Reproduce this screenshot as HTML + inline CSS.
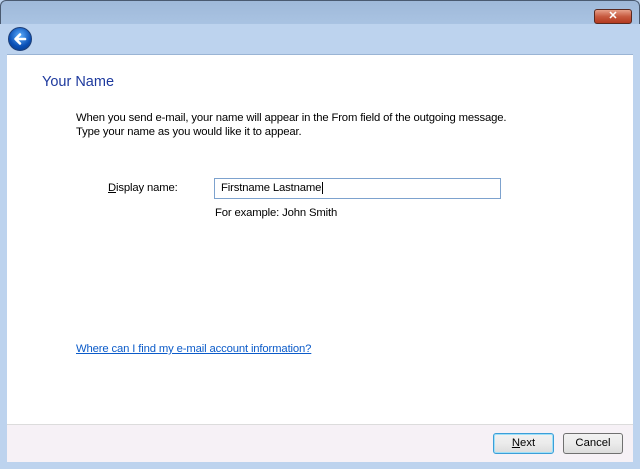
<!DOCTYPE html>
<html><head><style>
*{margin:0;padding:0;box-sizing:border-box}
body{width:640px;height:469px;overflow:hidden;position:relative;background:#bdd3ee;font-family:"Liberation Sans",sans-serif;font-size:11.3px;color:#000}
.top{position:absolute;left:0;top:0;width:640px;height:24px;background:linear-gradient(#9fb9d9,#a9c3e2);border:1px solid #4a5a70;border-bottom:none;border-radius:6px 6px 0 0}
.close{position:absolute;left:594px;top:9px;width:38px;height:15px;border:1px solid #5a2a20;border-radius:3px;background:linear-gradient(#e8a08a,#c75a40 50%,#b33a20);color:#fff;font-weight:bold;font-size:11px;text-align:center;line-height:13px}
.back{position:absolute;left:8px;top:27px;width:24px;height:24px;border-radius:50%;background:radial-gradient(circle at 50% 35%,#5fb0ff,#0a4fb5 60%,#063a88);border:1px solid #1e3f78}
.main{position:absolute;left:7px;top:54px;width:626px;height:370px;background:#fff;border-top:1px solid #9ab4d4}
.foot{position:absolute;left:7px;top:424px;width:626px;height:38px;background:#f6f1f6;border-top:1px solid #dcdcdc}
.t{position:absolute;white-space:nowrap;letter-spacing:-0.15px}
h1{position:absolute;left:42px;top:74px;font-weight:normal;font-size:14.5px;color:#1e3a9e;white-space:nowrap}
.inp{position:absolute;left:214px;top:178px;width:287px;height:21px;border:1px solid #7da2ce;background:#fff;padding-left:6px;line-height:19px}
.btn{position:absolute;top:433px;height:21px;border:1px solid #707070;border-radius:3px;background:linear-gradient(#f2f2f2,#ebebeb 50%,#dcdcdc);text-align:center;line-height:19px}
a{color:#0b5bc9}
</style></head><body>
<div class="top"></div>
<div class="close">✕</div>
<div class="back"><svg width="22" height="22" viewBox="0 0 22 22"><path d="M16 11H7M11 6.5L6.5 11 11 15.5" stroke="#fff" stroke-width="2.6" fill="none" stroke-linecap="round" stroke-linejoin="round"/></svg></div>
<div class="main"></div>
<div class="foot"></div>
<h1>Your Name</h1>
<div class="t" style="left:76px;top:112px">When you send e-mail, your name will appear in the From field of the outgoing message.</div>
<div class="t" style="left:76px;top:126px">Type your name as you would like it to appear.</div>
<div class="t" style="left:108px;top:182px"><u>D</u>isplay name:</div>
<div class="inp t">Firstname Lastname<span style="border-left:1px solid #000;margin-left:1px"></span></div>
<div class="t" style="left:215px;top:207px">For example: John Smith</div>
<div class="t" style="left:76px;top:343px"><a href="#">Where can I find my e-mail account information?</a></div>
<div class="btn" style="left:493px;width:61px;border-color:#3c9ed8;box-shadow:inset 0 0 0 1px #9fe0f8"><u>N</u>ext</div>
<div class="btn" style="left:563px;width:60px">Cancel</div>
</body></html>
